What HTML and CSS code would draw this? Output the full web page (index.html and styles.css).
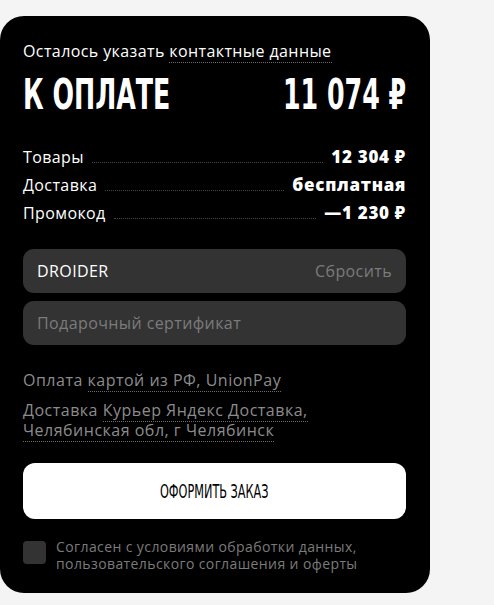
FILE: index.html
```html
<!DOCTYPE html>
<html lang="ru">
<head>
    <meta charset="UTF-8">
    <title>Оформление заказа</title>
    <link rel="stylesheet" href="styles.css">
</head>
<body>
<div class="checkout">
    <p class="notice">Осталось указать <span class="dotted">контактные данные</span></p>
    <div class="total-wrap">
        <div class="total">
            <span>К ОПЛАТЕ</span>
            <span>11 074 ₽</span>
        </div>
    </div>
    <div class="rows">
        <div class="row">
            <span class="label">Товары</span>
            <span class="leader"></span>
            <span class="value">12 304 ₽</span>
        </div>
        <div class="row">
            <span class="label">Доставка</span>
            <span class="leader"></span>
            <span class="value">бесплатная</span>
        </div>
        <div class="row">
            <span class="label">Промокод</span>
            <span class="leader"></span>
            <span class="value">—1 230 ₽</span>
        </div>
    </div>
    <div class="field">
        <span class="field-text">DROIDER</span>
        <span class="reset">Сбросить</span>
    </div>
    <div class="field">
        <span class="placeholder">Подарочный сертификат</span>
    </div>
    <p class="info">Оплата <span class="dotted">картой из РФ, UnionPay</span></p>
    <p class="info">Доставка <span class="dotted">Курьер Яндекс Доставка,<br>Челябинская обл, г Челябинск</span></p>
    <button class="submit" type="button"><span>ОФОРМИТЬ ЗАКАЗ</span></button>
    <label class="agree">
        <span class="box"></span>
        <span>Согласен с условиями обработки данных,<br>пользовательского соглашения и оферты</span>
    </label>
</div>
</body>
</html>
```

FILE: styles.css
```css
body {
    margin: 0;
    background-color: #f4f4f5;
    font-family: "Open Sans", "Noto Sans", sans-serif;
}

.checkout {
    width: 430px;
    margin-top: 16px;
    box-sizing: border-box;
    padding: 25px 24px 21px 23px;
    background-color: #000;
    border-radius: 24px;
    color: #fff;
}

.notice {
    margin: 0;
    font-size: 16px;
    line-height: 20px;
    letter-spacing: 0.4px;
    color: #fff;
}

.dotted {
    border-bottom: 1px dotted #6a6a6a;
}

/* condensed headline: no narrow font installed, so squeeze a condensed one */
.total-wrap {
    height: 46px;
    margin-top: 11px;
}

.total {
    display: flex;
    justify-content: space-between;
    width: 572px;
    transform: scaleX(0.67);
    transform-origin: left center;
    font-family: "DejaVu Sans Condensed", sans-serif;
    font-weight: bold;
    font-size: 42px;
    line-height: 46px;
    white-space: nowrap;
}

.rows {
    margin-top: 27px;
}

.row {
    display: flex;
    align-items: baseline;
    height: 28px;
    font-size: 16px;
    letter-spacing: 0.4px;
}

.leader {
    flex-grow: 1;
    margin: 0 8px;
    border-bottom: 1px dotted #444;
}

.value {
    font-weight: 800;
    font-size: 17px;
    letter-spacing: 0.7px;
}

.field {
    display: flex;
    justify-content: space-between;
    align-items: center;
    height: 44px;
    margin-top: 8px;
    padding: 0 14px;
    background-color: #333;
    border-radius: 11px;
    font-size: 16px;
    letter-spacing: 0.4px;
}

.rows + .field {
    margin-top: 20px;
}

.reset, .placeholder {
    color: #7b7b7b;
}

.info {
    margin: 0;
    font-size: 16px;
    line-height: 20px;
    letter-spacing: 0.5px;
    color: #8c8c8c;
}

.field + .info {
    margin-top: 25px;
}

.info + .info {
    margin-top: 10px;
}

.submit {
    display: block;
    width: 100%;
    height: 56px;
    margin-top: 23px;
    border: none;
    border-radius: 12px;
    background-color: #fff;
    color: #000;
    font-family: "DejaVu Sans Condensed", sans-serif;
    font-size: 19px;
    white-space: nowrap;
    cursor: pointer;
}

.submit span {
    display: inline-block;
    transform: scaleX(0.66);
}

.agree {
    display: flex;
    gap: 10px;
    margin-top: 19px;
    font-size: 14px;
    line-height: 17px;
    letter-spacing: 0.4px;
    color: #7b7b7b;
}

.box {
    flex-shrink: 0;
    width: 23px;
    height: 23px;
    margin-top: 3px;
    background-color: #333;
    border-radius: 4px;
}
```
